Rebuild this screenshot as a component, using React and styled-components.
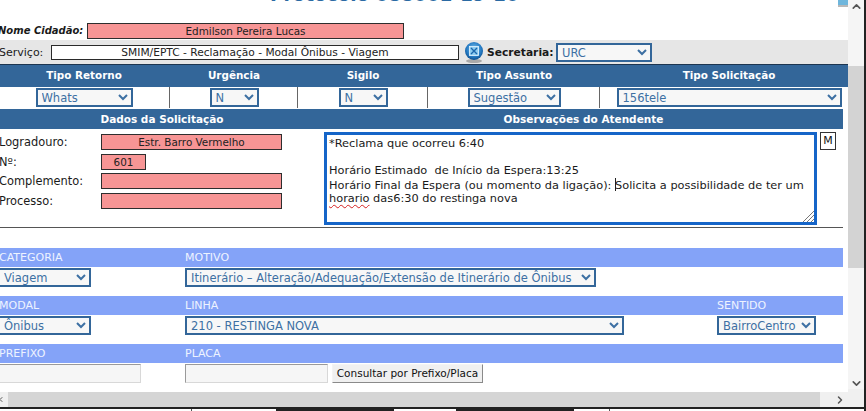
import React from 'react';
import styled, { createGlobalStyle } from 'styled-components';
import { ChevronUp, ChevronDown, ChevronLeft, ChevronRight } from 'lucide-react';

const Global = createGlobalStyle`
  html, body { margin: 0; padding: 0; background: #fff; overflow: hidden; }
  * { box-sizing: border-box; }
`;

export default function App() {
  return (
    <Window>
      <Global />
      <Main>
        <TitleRow>
          <Title>Protocolo 088001-19-10</Title>
          <CornerIcon viewBox="0 0 10 8">
            <rect x="0" y="0" width="10" height="5" fill="#6fb6dc" />
            <rect x="0" y="5" width="10" height="2" fill="#b8b8b8" />
          </CornerIcon>
        </TitleRow>

        <NomeRow>
          <NomeLabel>Nome Cidadão:</NomeLabel>
          <PinkField $width={317} $center defaultValue="Edmilson Pereira Lucas" readOnly />
        </NomeRow>

        <ServicoRow>
          <ServicoLabel>Serviço:</ServicoLabel>
          <ServiceField defaultValue="SMIM/EPTC - Reclamação - Modal Ônibus - Viagem" readOnly />
          <SearchIcon viewBox="0 0 20 22">
            <defs>
              <radialGradient id="orb" cx="0.5" cy="0.4" r="0.6">
                <stop offset="0" stopColor="#7cc4ee" />
                <stop offset="0.7" stopColor="#2479c2" />
                <stop offset="1" stopColor="#0f4f8c" />
              </radialGradient>
            </defs>
            <ellipse cx="10" cy="20" rx="8" ry="2" fill="#a9a9a9" />
            <circle cx="10" cy="10" r="9" fill="url(#orb)" />
            <rect x="5.5" y="5.5" width="9" height="9" fill="#8fcdf0" stroke="#e8f6ff" strokeWidth="0.8" />
            <path d="M7 7l6 6M13 7l-6 6" stroke="#1b66ad" strokeWidth="1.4" />
          </SearchIcon>
          <SecretariaLabel>Secretaria:</SecretariaLabel>
          <Select $width={96}><option>URC</option></Select>
        </ServicoRow>

        <HeaderGrid>
          <HeaderCell>Tipo Retorno</HeaderCell>
          <HeaderCell>Urgência</HeaderCell>
          <HeaderCell>Sigilo</HeaderCell>
          <HeaderCell>Tipo Assunto</HeaderCell>
          <HeaderCell $shift>Tipo Solicitação</HeaderCell>
        </HeaderGrid>

        <ChoiceGrid>
          <ChoiceCell><Select $width={97}><option>Whats</option></Select></ChoiceCell>
          <ChoiceCell><Select $width={49}><option>N</option></Select></ChoiceCell>
          <ChoiceCell><Select $width={49}><option>N</option></Select></ChoiceCell>
          <ChoiceCell><Select $width={93}><option>Sugestão</option></Select></ChoiceCell>
          <ChoiceCell $last $shift><Select $width={225}><option>156tele</option></Select></ChoiceCell>
        </ChoiceGrid>

        <Content>
          <SectionHeader>
            <span>Dados da Solicitação</span>
            <span>Observações do Atendente</span>
          </SectionHeader>

          <RequestBody>
            <AddressForm>
              <FieldLabel>Logradouro:</FieldLabel>
              <PinkField $width={181} $center defaultValue="Estr. Barro Vermelho" readOnly />
              <FieldLabel>Nº:</FieldLabel>
              <PinkField $width={45} $center defaultValue="601" readOnly />
              <FieldLabel>Complemento:</FieldLabel>
              <PinkField $width={181} readOnly />
              <FieldLabel>Processo:</FieldLabel>
              <PinkField $width={181} readOnly />
            </AddressForm>

            <NotesBox>
              {'*Reclama que ocorreu 6:40\n\nHorário Estimado  de Início da Espera:13:25\nHorário Final da Espera (ou momento da ligação): '}
              <Caret />
              {'Solicita a possibilidade de ter um\n'}
              <Misspelled>horario</Misspelled>
              {' das6:30 do restinga nova'}
              <Resizer viewBox="0 0 12 12">
                <path d="M1 12L12 1M5 12l7-7M9 12l3-3" stroke="#777" strokeWidth="1" />
              </Resizer>
            </NotesBox>
            <MButton>M</MButton>
          </RequestBody>

          <FilterBlock $first>
            <BarGrid>
              <BarLabel>CATEGORIA</BarLabel>
              <BarLabel>MOTIVO</BarLabel>
            </BarGrid>
            <ControlGrid>
              <Select $width={93} $pull><option>Viagem</option></Select>
              <Select $width={411}><option>Itinerário – Alteração/Adequação/Extensão de Itinerário de Ônibus</option></Select>
            </ControlGrid>
          </FilterBlock>

          <FilterBlock>
            <BarGrid>
              <BarLabel>MODAL</BarLabel>
              <BarLabel>LINHA</BarLabel>
              <BarLabel>SENTIDO</BarLabel>
            </BarGrid>
            <ControlGrid>
              <Select $width={93} $pull><option>Ônibus</option></Select>
              <Select $width={439}><option>210 - RESTINGA NOVA</option></Select>
              <Select $width={99}><option>BairroCentro</option></Select>
            </ControlGrid>
          </FilterBlock>

          <FilterBlock>
            <BarGrid>
              <BarLabel>PREFIXO</BarLabel>
              <BarLabel>PLACA</BarLabel>
            </BarGrid>
            <ControlGrid>
              <GreyField $width={145} $pull />
              <PlateCell>
                <GreyField $width={143} />
                <QueryButton>Consultar por Prefixo/Placa</QueryButton>
              </PlateCell>
            </ControlGrid>
          </FilterBlock>
        </Content>

        <HScroll>
          <ArrowBox $width={8} $nudge={-3}><ChevronLeft size={11} strokeWidth={3} /></ArrowBox>
          <HThumb />
          <ArrowBox $width={28} $nudge={6}><ChevronRight size={12} strokeWidth={3} /></ArrowBox>
        </HScroll>
      </Main>

      <VScroll>
        <ArrowBox $height={12}><ChevronUp size={13} strokeWidth={3} /></ArrowBox>
        <VGap />
        <VThumb />
        <VRest />
        <ArrowBox $height={12}><ChevronDown size={13} strokeWidth={3} /></ArrowBox>
        <VCorner />
      </VScroll>
      <Frame />

      <BottomStrip>
        <StripTick $at={191} />
        <StripBlock $at={276} $width={118} />
        <StripBlock $at={456} $width={118} />
        <StripTick $at={609} />
      </BottomStrip>
    </Window>
  );
}

const Window = styled.div`
  width: 866px;
  height: 411px;
  overflow: hidden;
  display: grid;
  grid-template-columns: 848px 16px 2px;
  grid-template-rows: 407px 4px;
  background: #fff;
  font-family: "DejaVu Sans", Verdana, sans-serif;
  font-size: 11px;
  color: #1a1a1a;
`;

const Main = styled.div`
  grid-column: 1;
  grid-row: 1;
  display: flex;
  flex-direction: column;
  min-width: 0;
`;

const TitleRow = styled.div`
  height: 23px;
  position: relative;
  overflow: hidden;
  padding-left: 270px;
`;

const Title = styled.h1`
  margin: -18px 0 0;
  font-size: 18.4px;
  line-height: 26px;
  font-weight: 700;
  color: #2b6aa3;
  white-space: nowrap;
`;

const CornerIcon = styled.svg`
  position: absolute;
  right: 0;
  top: 0;
  width: 10px;
  height: 8px;
`;

const NomeRow = styled.div`
  height: 17px;
  display: flex;
  align-items: flex-start;
  margin-left: -2px;
`;

const NomeLabel = styled.label`
  width: 89px;
  font-weight: 700;
  font-style: italic;
  font-size: 10px;
  line-height: 16px;
  white-space: nowrap;
`;

const PinkField = styled.input`
  width: ${p => p.$width}px;
  height: 16px;
  padding: 0;
  border: 1px solid #2e2e2e;
  background: #f79595;
  color: #222;
  font: 10.4px "DejaVu Sans", Verdana, sans-serif;
  text-align: ${p => (p.$center ? 'center' : 'left')};
  outline: none;
`;

const ServicoRow = styled.div`
  height: 24px;
  display: flex;
  align-items: center;
  background: #e6e6e6;
`;

const ServicoLabel = styled.label`
  width: 51px;
  margin-left: -1px;
  flex: none;
  white-space: nowrap;
`;

const ServiceField = styled.input`
  width: 408px;
  height: 15px;
  margin-left: 1px;
  padding: 0;
  border: 1px solid #2a2a2a;
  background: #fff;
  color: #222;
  font: 10.65px "DejaVu Sans", Verdana, sans-serif;
  text-align: center;
`;

const SearchIcon = styled.svg`
  width: 20px;
  height: 22px;
  margin-left: 5px;
  flex: none;
`;

const SecretariaLabel = styled.label`
  margin-left: 3px;
  width: 69px;
  font-weight: 700;
  font-size: 10.7px;
  white-space: nowrap;
`;

const Select = styled.select`
  width: ${p => p.$width}px;
  height: 19px;
  margin-left: ${p => (p.$pull ? '-2px' : '0')};
  padding: 0;
  border: 2px solid #336699;
  border-radius: 0;
  background-color: #f7f7f7;
  color: #3d70a3;
  font: 11.5px "DejaVu Sans", Verdana, sans-serif;
  outline: none;
`;

const HeaderGrid = styled.div`
  height: 23px;
  margin-left: -2px;
  display: grid;
  grid-template-columns: 172px 128px 130px 172px 248px;
  background: #336699;
  border-top: 1px solid #1d3550;
`;

const HeaderCell = styled.div`
  color: #fff;
  font-weight: 700;
  font-size: 10.4px;
  line-height: 21px;
  text-align: center;
  padding-left: ${p => (p.$shift ? '10px' : '0')};
`;

const ChoiceGrid = styled.div`
  height: 21px;
  margin-left: -2px;
  display: grid;
  grid-template-columns: 172px 128px 130px 172px 248px;
`;

const ChoiceCell = styled.div`
  display: flex;
  align-items: center;
  justify-content: center;
  padding-left: ${p => (p.$shift ? '10px' : '0')};
  box-shadow: ${p => (p.$last ? 'none' : 'inset -1px 0 #666')};
`;

const Content = styled.div`
  width: 843px;
  flex: 1;
  margin-top: 1px;
`;

const SectionHeader = styled.div`
  height: 20px;
  display: grid;
  grid-template-columns: 324px 1fr;
  background: #336699;
  color: #fff;
  font-size: 10.5px;
  font-weight: 700;
  line-height: 21px;
  text-align: center;
`;

const RequestBody = styled.div`
  height: 99px;
  display: flex;
  align-items: flex-start;
  padding-top: 3px;
  border-bottom: 1px solid #555;
`;

const AddressForm = styled.div`
  width: 324px;
  flex: none;
  display: grid;
  grid-template-columns: 102px 1fr;
  grid-auto-rows: 19.5px;
  margin-left: -1px;
  padding-top: 2px;
`;

const FieldLabel = styled.label`
  font-size: 11.4px;
  line-height: 16px;
  white-space: nowrap;
`;

const NotesBox = styled.div`
  position: relative;
  width: 493px;
  height: 93px;
  flex: none;
  margin-left: 1px;
  padding: 2px 2px 0 2px;
  border: 3px solid #1565c8;
  background: #fff;
  font-size: 11.35px;
  line-height: 13.6px;
  white-space: pre-wrap;
  overflow: hidden;
`;

const Caret = styled.span`
  display: inline-block;
  width: 1px;
  height: 13px;
  margin-right: -1px;
  vertical-align: -2px;
  background: #222;
`;

const Misspelled = styled.span`
  text-decoration: underline wavy #d42020 1px;
  text-underline-offset: 2px;
`;

const Resizer = styled.svg`
  position: absolute;
  right: 0;
  bottom: 0;
  width: 12px;
  height: 12px;
`;

const MButton = styled.button`
  width: 16px;
  height: 18px;
  margin-left: 3px;
  padding: 0;
  border: 1px solid #333;
  background: #fff;
  color: #111;
  font: 11px/14px "DejaVu Sans", Verdana, sans-serif;
`;

const FilterBlock = styled.div`
  display: flex;
  flex-direction: column;
  margin-top: ${p => (p.$first ? '20px' : '0')};
  margin-bottom: 9px;
`;

const BarGrid = styled.div`
  height: 19px;
  display: grid;
  grid-template-columns: 185px 532px 1fr;
  background: #84a3f8;
`;

const BarLabel = styled.span`
  color: #eef3ff;
  font-size: 11px;
  line-height: 19px;
  &:first-child { margin-left: -1px; }
`;

const ControlGrid = styled.div`
  height: 20px;
  display: grid;
  grid-template-columns: 185px 532px 1fr;
  align-items: center;
`;

const PlateCell = styled.div`
  display: flex;
  gap: 4px;
  align-items: center;
`;

const GreyField = styled.input`
  width: ${p => p.$width}px;
  height: 19px;
  margin-left: ${p => (p.$pull ? '-4px' : '0')};
  padding: 0;
  border: 1px solid #d8d8d8;
  border-top-color: #9a9a9a;
  border-left-color: #9a9a9a;
  background: #f6f6f6;
`;

const QueryButton = styled.button`
  width: 151px;
  height: 19px;
  padding: 0;
  border: 1px solid;
  border-color: #f4f4f4 #8a8a8a #8a8a8a #f4f4f4;
  background: #f0f0f0;
  color: #111;
  font: 10.5px "DejaVu Sans", Verdana, sans-serif;
  white-space: nowrap;
`;

const HScroll = styled.div`
  height: 15px;
  flex: none;
  display: flex;
  background: #f0f0f0;
`;

const ArrowBox = styled.div`
  flex: none;
  width: ${p => (p.$width ? `${p.$width}px` : 'auto')};
  height: ${p => (p.$height ? `${p.$height}px` : 'auto')};
  display: flex;
  align-items: center;
  justify-content: center;
  color: #555;
  transform: translateX(${p => p.$nudge || 0}px);
`;

const HThumb = styled.div`
  width: 812px;
  background: #d5d5d5;
`;

const VScroll = styled.div`
  grid-column: 2;
  grid-row: 1;
  display: flex;
  flex-direction: column;
  background: #f5f5f5;
`;

const VGap = styled.div`
  height: 54px;
`;

const VThumb = styled.div`
  height: 202px;
  background: #d3d3d3;
`;

const VRest = styled.div`
  flex: 1;
`;

const VCorner = styled.div`
  height: 18px;
  background: #f0f0f0;
`;

const Frame = styled.div`
  grid-column: 3;
  grid-row: 1 / 3;
  background: #222;
`;

const BottomStrip = styled.div`
  grid-column: 1 / 3;
  grid-row: 2;
  position: relative;
  border-top: 2px solid #222;
`;

const StripTick = styled.i`
  position: absolute;
  left: ${p => p.$at}px;
  top: 0;
  bottom: 0;
  width: 1px;
  background: #555;
`;

const StripBlock = styled.i`
  position: absolute;
  left: ${p => p.$at}px;
  width: ${p => p.$width}px;
  top: 0;
  bottom: 0;
  background: #222;
`;
